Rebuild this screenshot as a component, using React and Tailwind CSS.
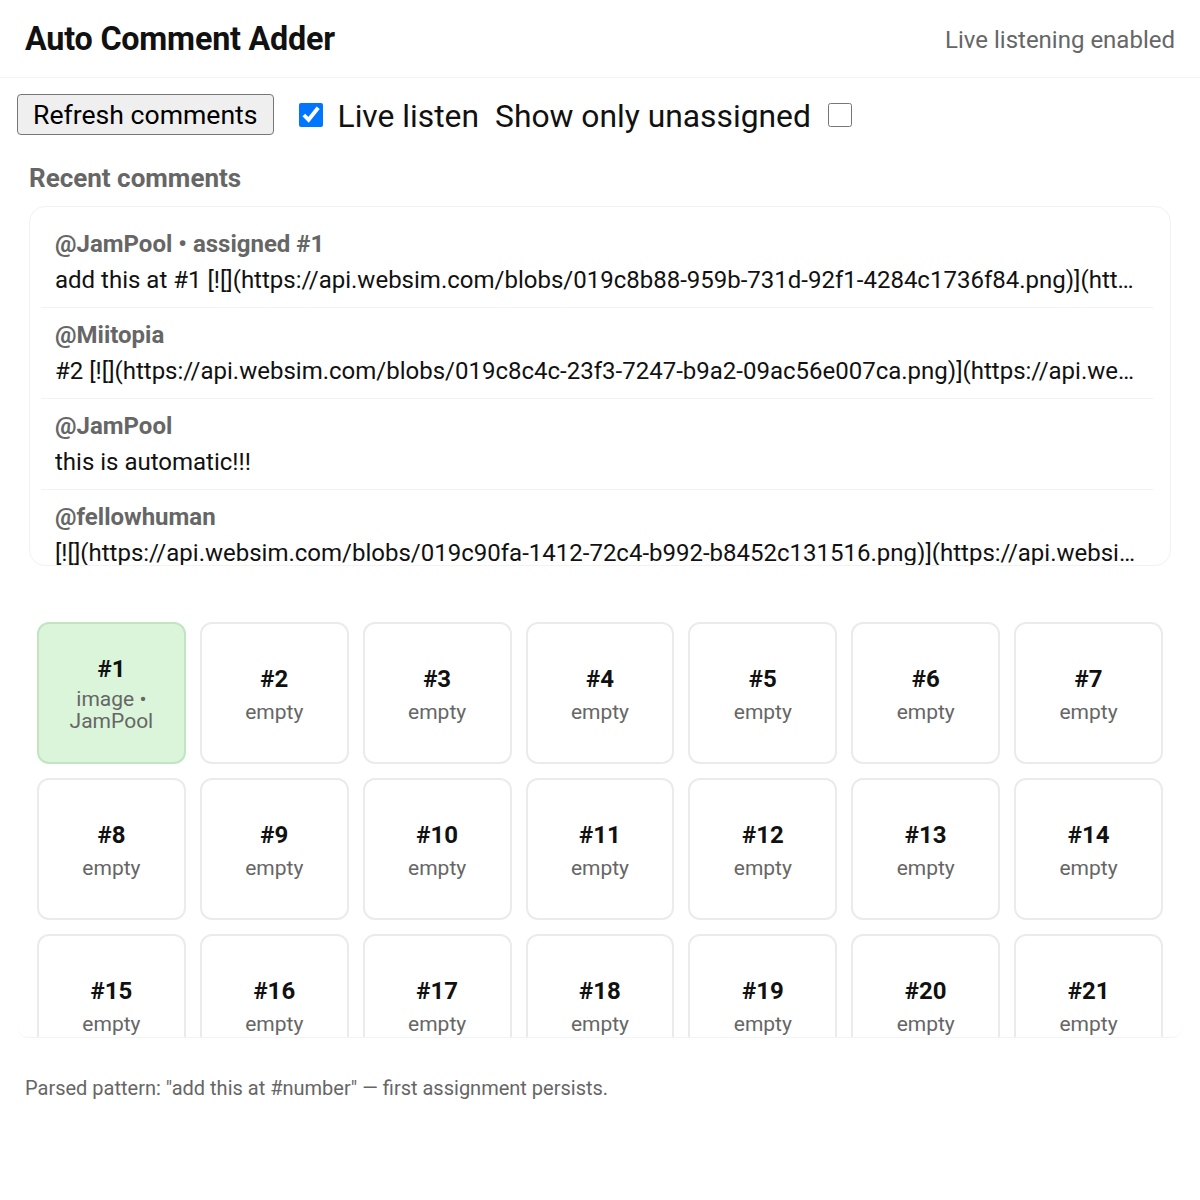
import { useState } from "react";

const comments = [
  {
    author: "JamPool",
    assigned: 1,
    text: "add this at #1 [![](https://api.websim.com/blobs/019c8b88-959b-731d-92f1-4284c1736f84.png)](https://api.websim.com/blobs/019c8b88-959b-731d-92f1-4284c1736f84.png)",
  },
  {
    author: "Miitopia",
    text: "#2 [![](https://api.websim.com/blobs/019c8c4c-23f3-7247-b9a2-09ac56e007ca.png)](https://api.websim.com/blobs/019c8c4c-23f3-7247-b9a2-09ac56e007ca.png)",
  },
  { author: "JamPool", text: "this is automatic!!!" },
  {
    author: "fellowhuman",
    text: "[![](https://api.websim.com/blobs/019c90fa-1412-72c4-b992-b8452c131516.png)](https://api.websim.com/blobs/019c90fa-1412-72c4-b992-b8452c131516.png)",
  },
  { author: "JamPool", text: "add this at #3" },
];

const slots = Array.from({ length: 28 }, (_, i) => ({
  n: i + 1,
  label: i === 0 ? "image • JamPool" : "empty",
  filled: i === 0,
}));

const App = () => {
  const [live, setLive] = useState(true);
  const [onlyUnassigned, setOnlyUnassigned] = useState(false);

  return (
    <div className="min-h-[1200px] bg-white text-[#111] font-['Roboto','Liberation_Sans',sans-serif]">
      <div className="h-[78px] px-[25px] pt-[2px] flex items-center justify-between border-b-[1.5px] border-[#f3f3f3]">
        <h1 className="text-[32.3px] font-bold tracking-[-0.2px]">Auto Comment Adder</h1>
        <span className="text-[24px] text-[#666]">Live listening enabled</span>
      </div>

      <div className="px-[17px]">
        <div className="mt-[16px] flex items-center">
          <button className="h-[41px] px-[15px] pt-[2px] text-[26.6px] leading-none bg-[#efefef] border-[1.5px] border-[#767676] rounded-[4px] text-black">
            Refresh comments
          </button>
          <input
            type="checkbox"
            checked={live}
            onChange={(e) => setLive(e.target.checked)}
            className="ml-[25px] mt-[1px] w-[24px] h-[24px] accent-[#0075ff]"
          />
          <span className="ml-[15px] mt-[4px] text-[31.8px] leading-none">Live listen</span>
          <span className="ml-[16px] mt-[4px] text-[31.8px] leading-none">Show only unassigned</span>
          <input
            type="checkbox"
            checked={onlyUnassigned}
            onChange={(e) => setOnlyUnassigned(e.target.checked)}
            className="ml-[17px] mt-[1px] w-[24px] h-[24px]"
          />
        </div>

        <div className="px-[12px]">
          <h2 className="mt-[28px] mb-[13px] text-[26px] leading-[30px] font-bold text-[#666]">
            Recent comments
          </h2>
          <div className="h-[360px] overflow-hidden rounded-[16px] border-[1.5px] border-[#f2f2f2] pt-[10px] pl-[11px] pr-[17px]">
            {comments.map((c, i) => (
              <div key={i} className="py-[9px] pl-[14px] pr-[14px] border-b-[1.5px] border-[#f2f2f2]">
                <div className="text-[24px] leading-[36px] font-bold text-[#666]">
                  @{c.author}
                  {c.assigned ? ` • assigned #${c.assigned}` : ""}
                </div>
                <div className="text-[24px] leading-[36px] truncate">{c.text}</div>
              </div>
            ))}
          </div>
        </div>

        <div className="mt-[36px] h-[436px] overflow-hidden p-[20px] border-b-[1.5px] border-[#f3f3f3] rounded-b-[12px]">
          <div className="grid grid-cols-7 gap-[14px]">
            {slots.map((s) => (
              <div
                key={s.n}
                className={
                  s.filled
                    ? "h-[142px] rounded-[12px] border-2 border-[#bfe6bf] bg-[#dbf5db] flex flex-col items-center justify-center gap-[4px] px-[8px] text-center"
                    : "h-[142px] rounded-[12px] border-2 border-[#ebebeb] bg-white flex flex-col items-center justify-center gap-[7px] px-[8px] text-center"
                }
              >
                <div className="text-[24px] leading-[30px] font-bold">#{s.n}</div>
                <div className="text-[21px] leading-[22px] text-[#666]">{s.label}</div>
              </div>
            ))}
          </div>
        </div>
      </div>

      <p className="mt-[36px] px-[25px] text-[20px] leading-[28px] text-[#666]">
        Parsed pattern: "add this at #number" — first assignment persists.
      </p>
    </div>
  );
};

export default App;
